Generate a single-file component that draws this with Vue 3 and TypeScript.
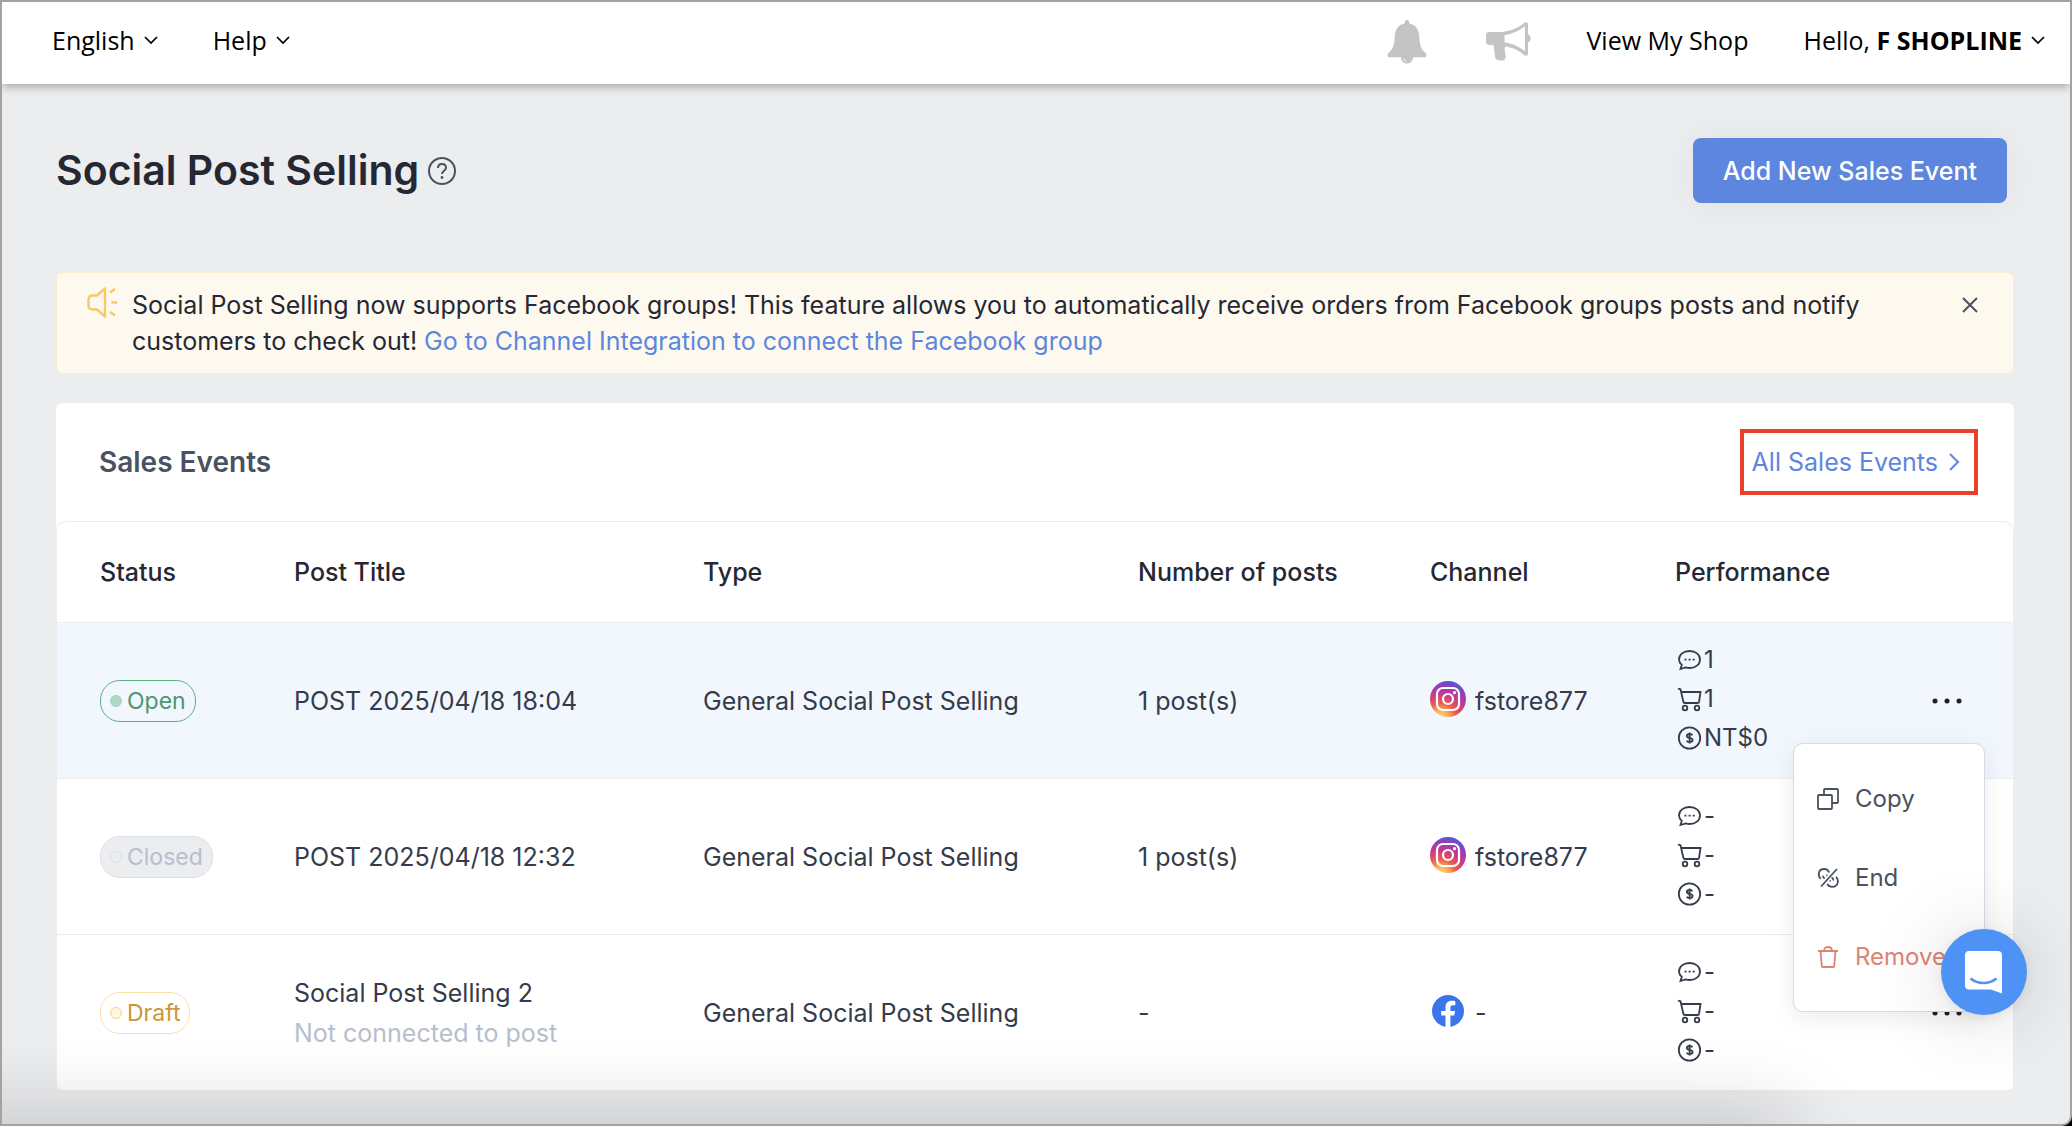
<script setup lang="ts">
import { ref } from 'vue'

type Status = 'Open' | 'Closed' | 'Draft'
type Channel = 'instagram' | 'facebook'

interface SalesEvent {
  id: number
  status: Status
  title: string
  note?: string
  type: string
  posts: string
  channel: Channel
  account: string
  comments: string
  orders: string
  revenue: string
}

const columns: { label: string; width: number }[] = [
  { label: 'Status', width: 237 },
  { label: 'Post Title', width: 409 },
  { label: 'Type', width: 435 },
  { label: 'Number of posts', width: 292 },
  { label: 'Channel', width: 245 },
  { label: 'Performance', width: 257 },
]

const events: SalesEvent[] = [
  {
    id: 1,
    status: 'Open',
    title: 'POST 2025/04/18 18:04',
    type: 'General Social Post Selling',
    posts: '1 post(s)',
    channel: 'instagram',
    account: 'fstore877',
    comments: '1',
    orders: '1',
    revenue: 'NT$0',
  },
  {
    id: 2,
    status: 'Closed',
    title: 'POST 2025/04/18 12:32',
    type: 'General Social Post Selling',
    posts: '1 post(s)',
    channel: 'instagram',
    account: 'fstore877',
    comments: '-',
    orders: '-',
    revenue: '-',
  },
  {
    id: 3,
    status: 'Draft',
    title: 'Social Post Selling 2',
    note: 'Not connected to post',
    type: 'General Social Post Selling',
    posts: '-',
    channel: 'facebook',
    account: '-',
    comments: '-',
    orders: '-',
    revenue: '-',
  },
]

const openMenu = ref<number | null>(1)
const bannerVisible = ref(true)

function toggleMenu(id: number): void {
  openMenu.value = openMenu.value === id ? null : id
}
</script>

<template>
  <div class="page">
    <header class="topbar">
      <nav class="group">
        <button type="button" class="toplink">
          English
          <svg class="chev" viewBox="0 0 16 10"><path d="M2 2l6 6 6-6" /></svg>
        </button>
        <button type="button" class="toplink">
          Help
          <svg class="chev" viewBox="0 0 16 10"><path d="M2 2l6 6 6-6" /></svg>
        </button>
      </nav>
      <div class="group right">
        <button type="button" class="iconbtn bell" aria-label="Notifications">
          <svg width="40" height="44" viewBox="0 0 40 44">
            <path
              fill="#c4c4c4"
              d="M20 0c1.500 0 2.300 1.200 2.500 3.400 6.300 1.300 9.500 6 9.800 13.600.4 8.500 2 12.500 6.400 16.200 1.300 1.300.9 4.100-1.100 4.100H2.400c-2 0-2.400-2.800-1.100-4.100C5.700 29.500 7.300 25.500 7.700 17c.3-7.600 3.500-12.300 9.800-13.600C17.700 1.200 18.500 0 20 0z"
            />
            <path fill="#c4c4c4" d="M14 37h12c0 4.200-2.500 6.500-6 6.500s-6-2.300-6-6.500z" />
            <path d="M16.500 38.500c.4 1.700 1.300 2.500 2.700 2.800" fill="none" stroke="#fff" stroke-width="1" />
          </svg>
        </button>
        <button type="button" class="iconbtn" aria-label="Announcements">
          <svg width="46" height="40" viewBox="0 0 46 40">
            <path
              fill="#c4c4c4"
              d="M4 10h13c9-1 17-4.500 22-9 1.500-1.200 4-.8 4 1.600v9.600c1.600.6 2.600 2 2.600 4s-1 3.600-2.600 4.200v11c0 2.400-2.500 3-4 1.600-5-4.600-10-7.400-19-8.600-.9 3.500.2 6 .6 9 .5 3.200-.8 5-3.600 5-4.400.4-6.400-.6-7-3.600L8.600 23H4c-2 0-3-1.300-3-3v-7c0-1.700 1-3 3-3z"
            />
            <path fill="#fff" d="M19.500 13.200C27 12 34 9 40 4v25.200c-6-5-13-8-20.500-9z" />
          </svg>
        </button>
        <a href="#shop" class="toplink">View My Shop</a>
        <button type="button" class="toplink">
          <span>Hello, <b>F SHOPLINE</b></span>
          <svg class="chev" viewBox="0 0 16 10"><path d="M2 2l6 6 6-6" /></svg>
        </button>
      </div>
    </header>

    <main class="content">
      <div class="heading">
        <h1>Social Post Selling</h1>
        <button type="button" class="iconbtn" aria-label="About this page">
          <svg width="30" height="30" viewBox="0 0 30 30" fill="none" stroke="#4a5160" stroke-width="2">
            <circle cx="15" cy="15" r="13" />
            <path d="M11 12c0-2.400 1.700-4 4-4s4 1.500 4 3.700c0 3-4 3-4 6.300" />
            <circle cx="15" cy="21.500" r="1.400" fill="#4a5160" stroke="none" />
          </svg>
        </button>
        <button type="button" class="primary">Add New Sales Event</button>
      </div>

      <section v-if="bannerVisible" class="banner">
        <svg class="horn" width="32" height="32" viewBox="0 0 32 32" fill="none" stroke="#fac864" stroke-width="2.400" stroke-linejoin="round">
          <path d="M19 1.500v28l-8-7H6.500c-2.500 0-4-1.500-4-4v-6c0-2.500 1.500-4 4-4H11z" />
          <path d="M24 5.500l5-3.500M25.500 15.500H31M24 25l5 3.500" />
        </svg>
        <p>
          Social Post Selling now supports Facebook groups! This feature allows you to automatically receive orders from
          Facebook groups posts and notify customers to check out!
          <a href="#channels">Go to Channel Integration to connect the Facebook group</a>
        </p>
        <button type="button" class="iconbtn close" aria-label="Dismiss" @click="bannerVisible = false">
          <svg width="18" height="18" viewBox="0 0 18 18"><path d="M2 2l14 14M16 2L2 16" stroke="#4a5160" stroke-width="2" /></svg>
        </button>
      </section>

      <section class="card">
        <div class="cardhead">
          <h2>Sales Events</h2>
          <a href="#all" class="all">
            All Sales Events
            <svg width="12" height="20" viewBox="0 0 12 20"><path d="M2 2l8 8-8 8" fill="none" stroke="currentColor" stroke-width="2" /></svg>
          </a>
        </div>
        <table>
          <colgroup>
            <col v-for="c in columns" :key="c.label" :style="{ width: c.width + 'px' }" />
            <col class="actcol" />
          </colgroup>
          <thead>
            <tr>
              <th v-for="c in columns" :key="c.label" scope="col">{{ c.label }}</th>
              <td></td>
            </tr>
          </thead>
          <tbody>
            <tr v-for="e in events" :key="e.id" :class="{ active: openMenu === e.id }">
              <td>
                <span class="tag" :class="e.status.toLowerCase()"><i></i>{{ e.status }}</span>
              </td>
              <td>
                {{ e.title }}
                <div v-if="e.note" class="note">{{ e.note }}</div>
              </td>
              <td>{{ e.type }}</td>
              <td>{{ e.posts }}</td>
              <td>
                <div class="channel">
                  <svg v-if="e.channel === 'instagram'" width="36" height="36" viewBox="0 0 36 36">
                    <defs>
                      <radialGradient :id="'ig' + e.id" cx="0.300" cy="1.050" r="1.050">
                        <stop offset="0" stop-color="#fbd56b" />
                        <stop offset="0.200" stop-color="#f9b95f" />
                        <stop offset="0.420" stop-color="#ee5a4b" />
                        <stop offset="0.680" stop-color="#c13a93" />
                        <stop offset="0.850" stop-color="#9a3cb8" />
                        <stop offset="1" stop-color="#5a56d0" />
                      </radialGradient>
                    </defs>
                    <circle cx="18" cy="18" r="18" :fill="`url(#ig${e.id})`" />
                    <g fill="none" stroke="#fff" stroke-width="2.200">
                      <rect x="7" y="7" width="22" height="22" rx="6" />
                      <circle cx="18" cy="18" r="5" />
                    </g>
                    <circle cx="24.500" cy="11.700" r="1.600" fill="#fff" />
                  </svg>
                  <svg v-else width="36" height="36" viewBox="0 0 36 36">
                    <circle cx="18" cy="18" r="16" fill="#3b75ea" />
                    <path
                      fill="#fff"
                      d="M15.500 34V22.500h-4.300v-4.600h4.300v-3.700c0-4.200 2.500-6.400 6.200-6.400 1.200 0 2.400.1 3.600.4v4h-2.200c-2 0-2.700 1.100-2.700 2.500v3.200h4.700l-.8 4.600h-3.900V34z"
                    />
                  </svg>
                  {{ e.account }}
                </div>
              </td>
              <td>
                <ul class="perf">
                  <li>
                    <svg viewBox="0 0 26 26">
                      <path d="M12.500 4C18.500 4 23 7.500 23 12.500S18.500 21 12.500 21c-1.300 0-2.600-.2-3.800-.6L3.500 22l1.300-4.200C3 16.200 2 14.500 2 12.500 2 7.500 6.500 4 12.500 4z" />
                      <path d="M7.500 12.700h2M11.600 12.700h2M15.700 12.700h2" />
                    </svg>
                    {{ e.comments }}
                  </li>
                  <li>
                    <svg viewBox="0 0 26 26">
                      <path d="M1 2.500l2.500.8L6.300 15.500c.2 1 .8 1.500 1.700 1.500h12.500c.9 0 1.400-.4 1.600-1.300L23.500 6H4.400" />
                      <circle cx="8" cy="22" r="2.300" />
                      <circle cx="20" cy="22" r="2.300" />
                    </svg>
                    {{ e.orders }}
                  </li>
                  <li>
                    <svg viewBox="0 0 26 26">
                      <circle cx="12.500" cy="13" r="10.700" />
                      <path d="M15.500 10.200c-.6-.8-1.600-1.200-2.900-1.200-1.700 0-2.700.8-2.700 1.900 0 2.800 5.700 1.200 5.700 4.200 0 1.200-1.200 2-2.900 2-1.400 0-2.500-.5-3.100-1.400M12.600 7.500v11" />
                    </svg>
                    {{ e.revenue }}
                  </li>
                </ul>
              </td>
              <td class="actions">
                <button v-if="e.status !== 'Closed'" type="button" class="iconbtn" aria-label="More actions" @click="toggleMenu(e.id)">
                  <svg width="30" height="6" viewBox="0 0 30 6" fill="#1c1f2b">
                    <circle cx="3" cy="3" r="2.500" />
                    <circle cx="15" cy="3" r="2.500" />
                    <circle cx="27" cy="3" r="2.500" />
                  </svg>
                </button>
                <div v-if="openMenu === e.id" class="menu">
                  <button type="button">
                    <svg viewBox="0 0 24 24">
                      <rect x="2" y="8" width="14" height="14" rx="1" />
                      <path d="M8 8V3c0-.6.4-1 1-1h12c.6 0 1 .4 1 1v12c0 .6-.4 1-1 1h-5" />
                    </svg>
                    Copy
                  </button>
                  <button type="button">
                    <svg viewBox="0 0 24 24">
                      <path d="M21 3L5 20.500" />
                      <path d="M4.800 12.800C1.500 9.500 2 3 8.200 3c2.400 0 4.200 1.300 4.900 3.600M20 10.800c3.300 3.200 2.300 10-3.700 10-2.300 0-4-1-5-2.800" />
                      <path d="M8.600 12.400c-1-.6-1.600-1.500-1.600-2.700M15.500 11.500c1.300.6 1.900 1.700 1.700 3M10.200 9.300h1.200M13.500 14.800h1.200" />
                    </svg>
                    End
                  </button>
                  <button type="button" class="danger">
                    <svg viewBox="0 0 24 24">
                      <path d="M2 6h20M4.500 6l1.300 15.200c0 .5.300.8.800.8h10.800c.5 0 .8-.3.800-.8L19.500 6M8 6c0-2.500 1.500-4 4-4s4 1.500 4 4" />
                    </svg>
                    Remove
                  </button>
                </div>
              </td>
            </tr>
          </tbody>
        </table>
      </section>
    </main>

    <div class="shade"></div>
    <button type="button" class="chat" aria-label="Open chat">
      <svg width="40" height="44" viewBox="0 0 40 44">
        <path fill="#fff" d="M5 1h29c2.500 0 4 1.500 4 4v38.500L27 39.500H5c-2.500 0-4-1.500-4-4V5c0-2.500 1.500-4 4-4z" />
        <path d="M6.500 28.500c7.500 6 18.500 6 26 0" fill="none" stroke="#4f92f6" stroke-width="2.600" />
      </svg>
    </button>
  </div>
</template>

<style>
body {
  margin: 0;
  background: #000;
}
</style>

<style scoped>
.page {
  box-sizing: border-box;
  position: relative;
  min-height: 100vh;
  overflow: hidden;
  border: 2px solid #a3a3a3;
  border-bottom-right-radius: 10px;
  background: #ecedef;
  color: #353b4b;
  font: 25px/36px Inter, 'Liberation Sans', sans-serif;
}
button {
  padding: 0;
  border: 0;
  background: none;
  color: inherit;
  font: inherit;
  cursor: pointer;
}
a {
  color: #5d86de;
  text-decoration: none;
}
svg {
  display: block;
  flex: none;
}
h1,
h2,
p,
ul {
  margin: 0;
}
.topbar {
  display: flex;
  justify-content: space-between;
  align-items: center;
  height: 82px;
  padding: 0 24px 6px 50px;
  box-sizing: border-box;
  position: relative;
  background: #fff;
  box-shadow: 0 2px 10px rgba(0, 0, 0, 0.35);
  color: #000;
  font-family: 'Open Sans', 'Noto Sans', sans-serif;
}
.group {
  display: flex;
  align-items: center;
  gap: 54px;
}
.right {
  gap: 55px;
}
.topbar .iconbtn {
  margin-top: 4px;
}
.bell {
  margin-right: 3px;
}
.toplink {
  display: flex;
  align-items: center;
  gap: 8px;
  color: #000;
}
.chev {
  width: 16px;
  height: 10px;
  fill: none;
  stroke: #000;
  stroke-width: 1.700;
}
.content {
  padding: 54px 56px 32px 54px;
}
.heading {
  display: flex;
  align-items: center;
  gap: 8px;
}
h1 {
  font-size: 41px;
  line-height: 65px;
  font-weight: 600;
  color: #252833;
}
.primary {
  margin: 0 7px 0 auto;
  padding: 0 30px;
  height: 65px;
  border-radius: 8px;
  background: #5d86de;
  box-shadow: 0 2px 40px rgba(0, 0, 0, 0.05);
  color: #fff;
  font-weight: 500;
}
.banner {
  display: flex;
  align-items: flex-start;
  margin-top: 69px;
  padding: 14px 34px 14px 29px;
  border: 1px solid #fbeccb;
  border-radius: 6px;
  background: #fef9ee;
  color: #252833;
}
.horn {
  margin-right: 14px;
}
.banner p {
  flex: 1;
  padding-right: 80px;
}
.close {
  margin-top: 9px;
}
.card {
  margin-top: 29px;
  border-radius: 6px;
  background: #fff;
}
.cardhead {
  display: flex;
  align-items: center;
  justify-content: space-between;
  padding: 0 36px 0 43px;
  height: 118px;
}
h2 {
  font-size: 28px;
  font-weight: 600;
  color: #4a5160;
}
.all {
  display: flex;
  align-items: center;
  gap: 10px;
  padding: 11px 14px 11px 8px;
  border: 4px solid #ea4027;
}
table {
  width: 100%;
  table-layout: fixed;
  border-collapse: separate;
  border-spacing: 0;
  border: 1px solid #ebedf1;
  border-bottom: 0;
  border-radius: 10px 10px 6px 6px;
}
.actcol {
  width: 81px;
}
th,
td {
  padding: 0;
  border-bottom: 1px solid #ebedf1;
  text-align: left;
  vertical-align: middle;
}
th {
  height: 100px;
  font-weight: 500;
  color: #252833;
}
tbody td {
  height: 155px;
}
tbody tr:last-child td {
  border-bottom: 0;
}
th:first-child,
td:first-child {
  padding-left: 43px;
}
.active td {
  background: #f2f7fe;
}
.note {
  margin-top: 4px;
  color: #b7becd;
}
.tag {
  display: inline-flex;
  align-items: center;
  gap: 5px;
  padding: 2px 9px;
  border: 1px solid;
  border-radius: 20px;
  font-size: 23px;
}
.tag i {
  box-sizing: border-box;
  width: 12px;
  height: 12px;
  border: 1px solid;
  border-radius: 50%;
}
.open {
  border-color: #5fae8a;
  color: #4d9673;
}
.open i {
  border-color: #a5d3bd;
  background: #aed9c6;
}
.closed {
  border-color: #dbdfe7;
  background: #ecedef;
  color: #b7becd;
}
.closed i {
  border-color: #dbdfe7;
}
.draft {
  border-color: #fbe0a2;
  color: #cb9633;
}
.draft i {
  border-color: #f5d28a;
  background: #fef6e3;
}
.channel {
  display: flex;
  align-items: center;
  gap: 9px;
}
.channel svg {
  margin-bottom: 4px;
}
.perf {
  padding: 0 0 4px 2px;
  list-style: none;
}
.perf li {
  display: flex;
  align-items: center;
  gap: 1px;
  font-size: 24px;
  line-height: 39px;
}
.perf svg {
  width: 26px;
  height: 26px;
  fill: none;
  stroke: #353b4b;
  stroke-width: 1.800;
}
.actions {
  position: relative;
}
.actions > .iconbtn {
  display: block;
  padding: 16px 0;
}
.menu {
  position: absolute;
  z-index: 2;
  top: 120px;
  right: 28px;
  box-sizing: border-box;
  width: 192px;
  padding: 15px 0;
  border: 1px solid #d6d9e6;
  border-radius: 10px;
  background: #fff;
  box-shadow: 0 6px 24px rgba(0, 0, 0, 0.08);
  font-size: 24px;
}
.menu button {
  display: flex;
  align-items: center;
  gap: 15px;
  width: 100%;
  height: 79px;
  padding-left: 22px;
  color: #4a5160;
}
.menu svg {
  width: 24px;
  height: 24px;
  fill: none;
  stroke: currentColor;
  stroke-width: 1.800;
}
.menu .danger {
  color: #dc8475;
}
.shade {
  position: absolute;
  left: -100px;
  right: 290px;
  bottom: -60px;
  height: 60px;
  box-shadow: 0 0 80px 10px rgba(0, 0, 0, 0.18);
  pointer-events: none;
}
.chat {
  position: absolute;
  z-index: 3;
  right: 43px;
  bottom: 109px;
  display: flex;
  align-items: center;
  justify-content: center;
  width: 86px;
  height: 86px;
  border-radius: 50%;
  background: #4f92f6;
  box-shadow: 0 2px 12px rgba(0, 0, 0, 0.08), 0 4px 80px rgba(0, 0, 0, 0.16);
}
</style>
